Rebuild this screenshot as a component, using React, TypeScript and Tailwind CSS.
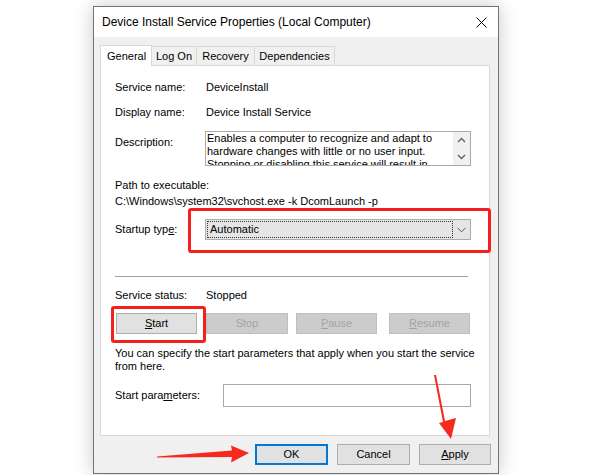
import React from "react";

const F = { fontFamily: '"Liberation Sans", Arial, sans-serif' };

function Btn({ children, w, disabled, primary }: { children: React.ReactNode; w: string; disabled?: boolean; primary?: boolean }) {
  return (
    <div
      className={`${w} h-[21px] flex items-center justify-center text-[11px] ${
        disabled
          ? "bg-[#cccccc] border border-[#bfbfbf] text-[#a3a3a3]"
          : primary
          ? "bg-[#e1e1e1] border-2 border-[#0078d7] text-black"
          : "bg-[#e1e1e1] border border-[#adadad] text-black"
      }`}
    >
      {children}
    </div>
  );
}

export default function App() {
  return (
    <div className="relative w-[600px] h-[475px] bg-white overflow-hidden text-black" style={F}>
      {/* window */}
      <div className="ml-[93px] mt-[6px] w-[406px] h-[468px] border border-[#737373] bg-[#f0f0f0] flex flex-col shadow-[0_0_18px_rgba(0,0,0,0.22)]">
        {/* title bar */}
        <div className="h-[30px] bg-white flex items-center justify-between pl-[8px] pr-[10px]">
          <span className="text-[12px] text-black">Device Install Service Properties (Local Computer)</span>
          <svg width="11" height="11" viewBox="0 0 11 11" className="mr-[1px]">
            <path d="M0.5 0.5 L10.5 10.5 M10.5 0.5 L0.5 10.5" stroke="#000" strokeWidth="1" />
          </svg>
        </div>
        {/* tabs */}
        <div className="mt-[7px] ml-[6px] flex items-end h-[21px] text-[11px]">
          <div className="h-[21px] w-[52px] bg-white border border-b-0 border-[#d9d9d9] flex items-center pl-[6px] relative z-10 -mb-px">
            General
          </div>
          <div className="h-[19px] w-[45px] border border-l-0 border-b-0 border-[#d9d9d9] flex items-center justify-center">Log On</div>
          <div className="h-[19px] w-[58px] border border-l-0 border-b-0 border-[#d9d9d9] flex items-center justify-center">Recovery</div>
          <div className="h-[19px] w-[80px] border border-l-0 border-b-0 border-[#d9d9d9] flex items-center justify-center">Dependencies</div>
        </div>
        {/* panel */}
        <div className="ml-[6px] w-[390px] h-[371px] bg-white border border-[#d9d9d9] pl-[14px] text-[11px] flex flex-col">
          <div className="mt-[13px] h-[16px] flex items-center">
            <span className="w-[91px]">Service name:</span>
            <span>DeviceInstall</span>
          </div>
          <div className="mt-[9px] h-[16px] flex items-center">
            <span className="w-[91px]">Display name:</span>
            <span>Device Install Service</span>
          </div>
          <div className="mt-[11px] flex">
            <span className="w-[90px] pt-[3px]">Description:</span>
            <div className="w-[266px] h-[35px] border border-[#a9a9a9] bg-white flex overflow-hidden">
              <div className="flex-1 pl-[1px] leading-[13px] overflow-hidden">
                Enables a computer to recognize and adapt to hardware changes with little or no user input. Stopping or disabling this service will result in system instability.
              </div>
              <div className="w-[17px] bg-[#f0f0f0] flex flex-col items-center justify-between py-[5px]">
                <svg width="9" height="6" viewBox="0 0 9 6"><path d="M1 5 L4.5 1.5 L8 5" stroke="#606060" strokeWidth="1.3" fill="none" /></svg>
                <svg width="9" height="6" viewBox="0 0 9 6"><path d="M1 1 L4.5 4.5 L8 1" stroke="#606060" strokeWidth="1.3" fill="none" /></svg>
              </div>
            </div>
          </div>
          <div className="mt-[11px] h-[16px] flex items-center">Path to executable:</div>
          <div className="h-[16px] flex items-center">C:\Windows\system32\svchost.exe -k DcomLaunch -p</div>
          <div className="mt-[10px] flex items-center">
            <span className="w-[90px]">
              Startup typ<u>e</u>:
            </span>
            <div className="w-[266px] h-[21px] bg-[#e5e5e5] border border-[#acacac] flex items-center pl-[1px]">
              <div className="w-[246px] h-[17px] border border-dotted border-[#333] flex items-center pl-[2px]">Automatic</div>
              <div className="flex-1 flex items-center justify-center">
                <svg width="9" height="6" viewBox="0 0 9 6"><path d="M0.5 0.8 L4.5 4.8 L8.5 0.8" stroke="#555" strokeWidth="1" fill="none" /></svg>
              </div>
            </div>
          </div>
          <div className="mt-[36px] w-[353px] h-px bg-[#a0a0a0]" />
          <div className="mt-[10px] h-[16px] flex items-center">
            <span className="w-[91px]">Service status:</span>
            <span>Stopped</span>
          </div>
          <div className="mt-[10px] flex ml-px">
            <Btn w="w-[81px]">
              <u>S</u>tart
            </Btn>
            <div className="ml-[9px]">
              <Btn w="w-[82px]" disabled>
                Stop
              </Btn>
            </div>
            <div className="ml-[8px]">
              <Btn w="w-[81px]" disabled>
                <u>P</u>ause
              </Btn>
            </div>
            <div className="ml-[12px]">
              <Btn w="w-[81px]" disabled>
                <u>R</u>esume
              </Btn>
            </div>
          </div>
          <div className="mt-[13px] leading-[13px] w-[360px]">
            You can specify the start parameters that apply when you start the service from here.
          </div>
          <div className="mt-[11px] flex items-center">
            <span className="w-[108px]">
              Start para<u>m</u>eters:
            </span>
            <div className="w-[248px] h-[23px] border border-[#a9a9a9] bg-white" />
          </div>
        </div>
        {/* bottom buttons */}
        <div className="mt-[8px] flex justify-end pr-[7px] gap-[9px]">
          <Btn w="w-[73px]" primary>
            OK
          </Btn>
          <Btn w="w-[73px]">Cancel</Btn>
          <Btn w="w-[72px]">
            <u>A</u>pply
          </Btn>
        </div>
      </div>

      {/* red annotations */}
      <div className="absolute left-[188px] top-[208px] w-[303px] h-[45px] border-[3px] border-[#f3201c] rounded-[3px]" />
      <div className="absolute left-[111px] top-[306px] w-[95px] h-[37px] border-[3px] border-[#f3201c] rounded-[3px]" />
      <svg className="absolute left-0 top-0" width="600" height="475" viewBox="0 0 600 475">
        <polygon points="157,456.5 232,450.5 231,445.5 249,453 231,462.5 232,457 157,457.5" fill="#f52a1c" />
        <polygon points="434,375 436,375 445,421 456,418 451,439 439,423 443,422" fill="#f52a1c" />
      </svg>
    </div>
  );
}
